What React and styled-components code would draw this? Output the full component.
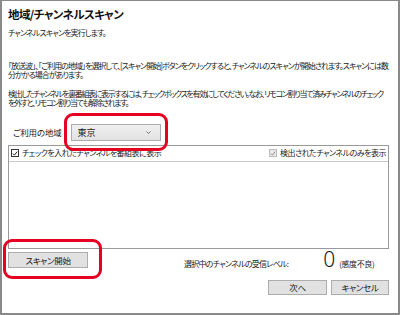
import React from "react";
import styled, { createGlobalStyle } from "styled-components";

const Global = createGlobalStyle`
  html, body { margin: 0; padding: 0; background: #fff; }
  body { font-family: "Noto Sans CJK JP", "Noto Sans", sans-serif; color: #1a1a1a; }
  * { box-sizing: border-box; }
`;

const Frame = styled.div`
  position: relative;
  width: 400px;
  height: 315px;
  border: 2px solid #8a8a8a;
  border-top-width: 1px;
  padding: 5px 9px 0 6px;
  display: flex;
  flex-direction: column;
  font-feature-settings: "palt";
  overflow: hidden;
`;

const Title = styled.h1`
  margin: 0;
  font-size: 11.5px;
  line-height: 16px;
  letter-spacing: -0.6px;
  font-weight: 700;
  color: #111;
`;

const Text = styled.p`
  margin: ${(p) => p.$mt}px 0 0 0;
  font-size: 8px;
  line-height: 9.6px;
  letter-spacing: ${(p) => p.$ls || -0.9}px;
  white-space: nowrap;
`;

const RegionRow = styled.div`
  display: flex;
  align-items: center;
  margin-top: 16px;
  padding-left: 5px;
  gap: 10px;
`;

const Label = styled.span`
  font-size: 8.5px;
  line-height: 12px;
  letter-spacing: -0.2px;
`;

const Select = styled.div`
  width: 90px;
  height: 17px;
  border: 1px solid #adadad;
  background: linear-gradient(#f0f0f0, #e2e2e2);
  display: flex;
  align-items: center;
  justify-content: space-between;
  padding: 0 9px 0 5px;
  font-size: 9px;
`;

const ListBox = styled.div`
  margin-top: 4px;
  height: 104px;
  border: 1px solid #9a9a9a;
  background: #fff;
  display: flex;
  flex-direction: column;
`;

const ListHeader = styled.div`
  height: 16px;
  border-bottom: 1px solid #c8c8c8;
  display: flex;
  align-items: center;
  justify-content: space-between;
  padding: 0 2px 0 2px;
`;

const CheckLabel = styled.label`
  display: flex;
  align-items: center;
  gap: 3px;
  font-size: 8px;
  line-height: 10px;
  letter-spacing: -0.5px;
  white-space: nowrap;
  color: #1a1a1a;
`;

const Box = styled.span`
  width: 8px;
  height: 8px;
  border: 1px solid ${(p) => (p.$disabled ? "#bcbcbc" : "#333")};
  background: ${(p) => (p.$disabled ? "#e9e9e9" : "#fff")};
  display: inline-flex;
  align-items: center;
  justify-content: center;
`;

const BottomRow = styled.div`
  display: flex;
  align-items: flex-start;
  margin-top: 3px;
`;

const Button = styled.button`
  width: ${(p) => p.$w}px;
  height: ${(p) => p.$h}px;
  border: 1px solid #adadad;
  background: #e1e1e1;
  font-family: "Noto Sans CJK JP", sans-serif;
  font-feature-settings: "palt";
  font-size: 8.5px;
  letter-spacing: -0.3px;
  color: #1a1a1a;
  padding: 0;
  display: flex;
  align-items: center;
  justify-content: center;
`;

const Level = styled.div`
  display: flex;
  align-items: baseline;
  margin-left: 96px;
  margin-top: -4px;
  white-space: nowrap;
`;

const LevelText = styled.span`
  font-size: 8px;
  letter-spacing: -0.75px;
`;

const Big = styled.span`
  font-family: "Noto Sans", sans-serif;
  font-weight: 300;
  font-size: 21px;
  line-height: 22px;
  margin-left: 35px;
  margin-right: 4px;
`;

const Small = styled.span`
  font-size: 8px;
  letter-spacing: -0.4px;
`;

const Actions = styled.div`
  display: flex;
  justify-content: flex-end;
  gap: 4px;
  margin-top: 10px;
`;

const Highlight = styled.div`
  position: absolute;
  border: 3px solid #e60022;
  border-radius: 9px;
  left: ${(p) => p.$x}px;
  top: ${(p) => p.$y}px;
  width: ${(p) => p.$w}px;
  height: ${(p) => p.$h}px;
  pointer-events: none;
`;

const Check = ({ color }) => (
  <svg width="7" height="7" viewBox="0 0 7 7">
    <polyline points="1,3.5 2.8,5.4 6,1.3" fill="none" stroke={color} strokeWidth="1.1" />
  </svg>
);

const Chevron = () => (
  <svg width="5" height="3" viewBox="0 0 5 3">
    <polyline points="0.5,0.5 2.5,2.5 4.5,0.5" fill="none" stroke="#555" strokeWidth="0.8" />
  </svg>
);

export default function App() {
  return (
    <>
      <Global />
      <Frame>
        <Title>地域/チャンネルスキャン</Title>
        <Text $mt={6}>チャンネルスキャンを実行します。</Text>
        <Text $mt={23} $ls={-0.98}>
          「放送波」、「ご利用の地域」を選択して、[スキャン開始]ボタンをクリックすると、チャンネルのスキャンが開始されます。スキャンには数
          <br />
          分かかる場合があります。
        </Text>
        <Text $mt={9} $ls={-1.35}>
          検出したチャンネルを裏番組表に表示するには、チェックボックスを有効にしてください。なお、リモコン割り当て済みチャンネルのチェック
          <br />
          を外すと、リモコン割り当ても解除されます。
        </Text>
        <RegionRow>
          <Label>ご利用の地域</Label>
          <Select>
            <span>東京</span>
            <Chevron />
          </Select>
        </RegionRow>
        <ListBox>
          <ListHeader>
            <CheckLabel>
              <Box>
                <Check color="#111" />
              </Box>
              チェックを入れたチャンネルを番組表に表示
            </CheckLabel>
            <CheckLabel>
              <Box $disabled>
                <Check color="#8a8a8a" />
              </Box>
              検出されたチャンネルのみを表示
            </CheckLabel>
          </ListHeader>
        </ListBox>
        <BottomRow>
          <Button $w={80} $h={16}>スキャン開始</Button>
          <Level>
            <LevelText>選択中のチャンネルの受信レベル:</LevelText>
            <Big>0</Big>
            <Small>(感度不良)</Small>
          </Level>
        </BottomRow>
        <Actions>
          <Button $w={59} $h={15}>次へ</Button>
          <Button $w={58} $h={15}>キャンセル</Button>
        </Actions>
        <Highlight $x={62} $y={112} $w={104} $h={38} />
        <Highlight $x={1} $y={238} $w={99} $h={40} />
      </Frame>
    </>
  );
}
